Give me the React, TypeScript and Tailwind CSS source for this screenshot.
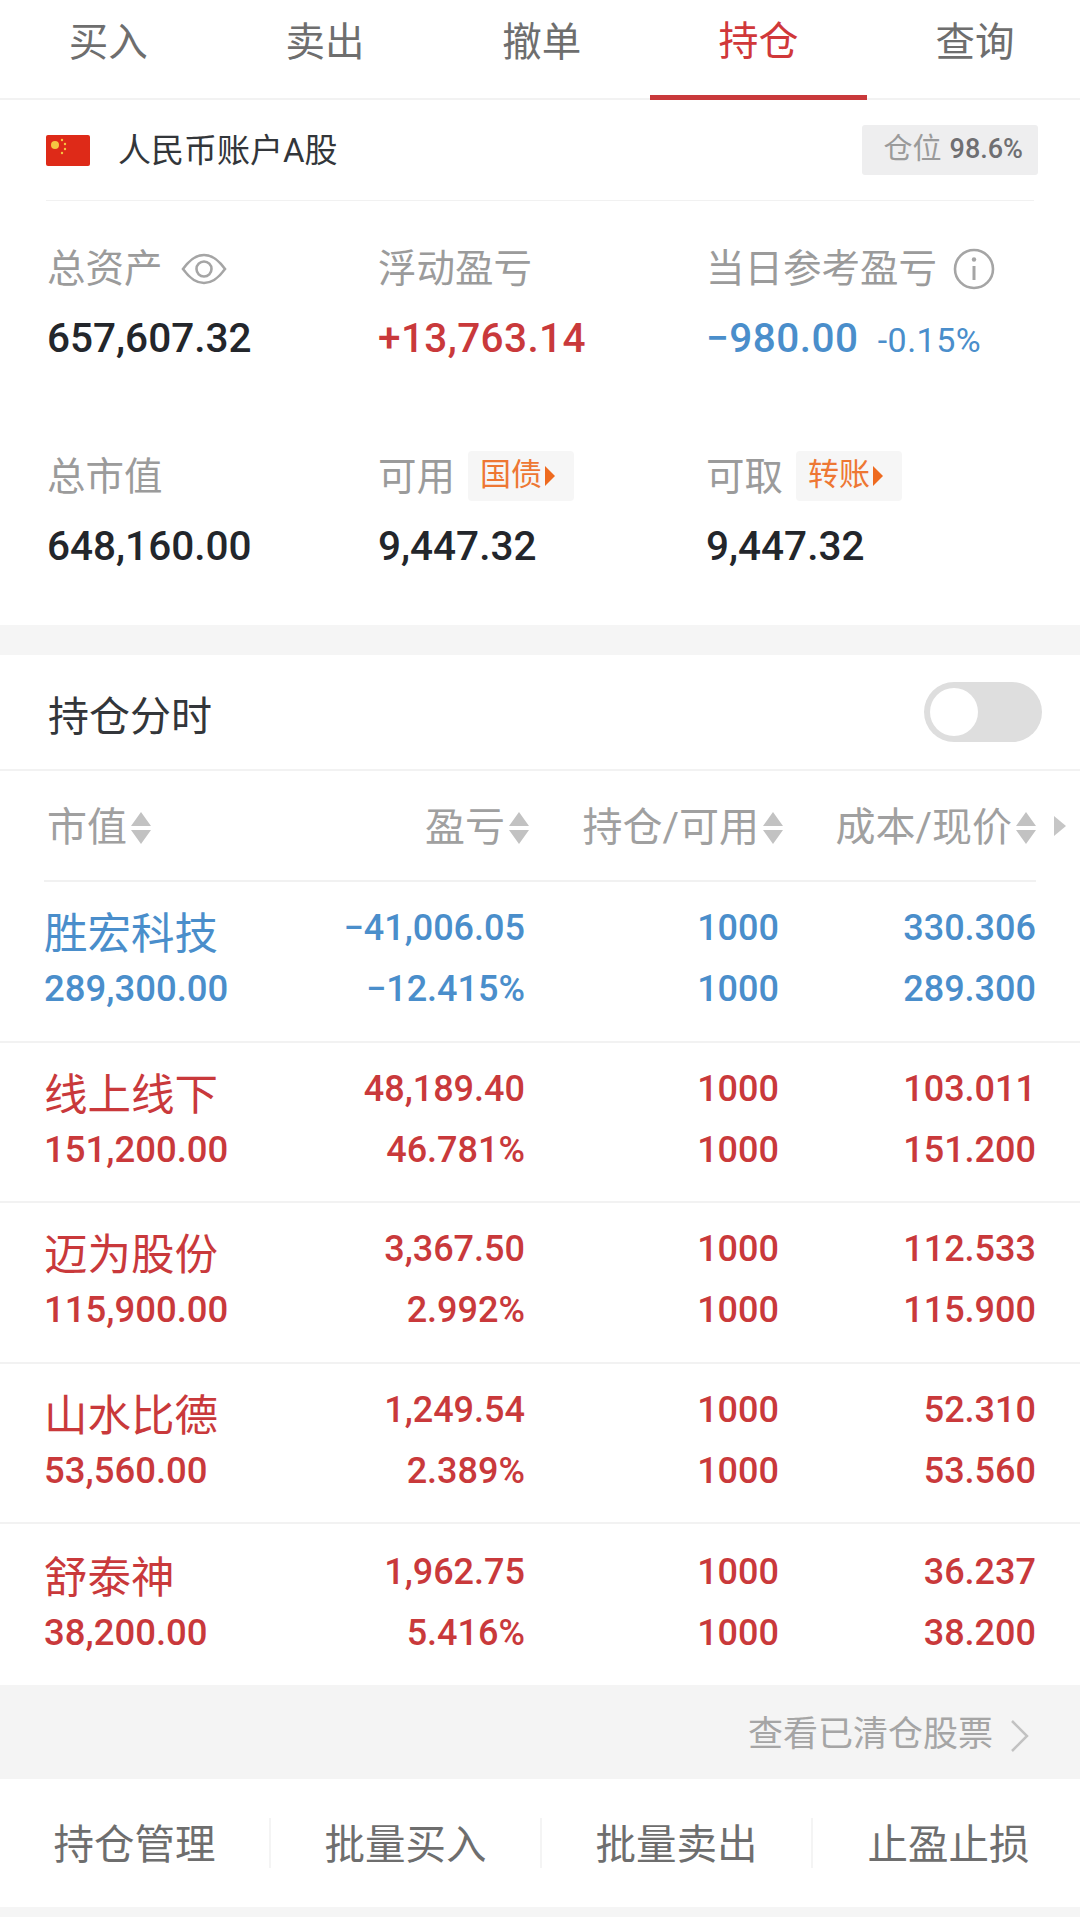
import React from "react";

const font = { fontFamily: '"Roboto","Noto Sans CJK SC",sans-serif' };

function Sort() {
  return (
    <svg width="22" height="36" viewBox="0 0 22 36" className="shrink-0 ml-[3px]">
      <path d="M11 2 L21 16 H1 Z M1 20 H21 L11 34 Z" fill="#c2c2c2" />
    </svg>
  );
}

function Stat({ label, extra, value, color = "text-[#23262b]", vc = "", tail }: { label: string; extra?: React.ReactNode; value: string; color?: string; vc?: string; tail?: React.ReactNode }) {
  return (
    <div className="flex flex-col">
      <div className="flex items-center h-[52px] text-[38.5px] text-[#9b9b9b]">
        <span>{label}</span>
        {extra}
      </div>
      <div className={`flex items-baseline mt-[13px] h-[52px] text-[40.5px] font-medium ${color}`}>
        <span className={vc}>{value}</span>
        {tail}
      </div>
    </div>
  );
}

function Tag({ text }: { text: string }) {
  return (
    <span className="ml-[13px] mb-[3px] flex items-center h-[50px] w-[106px] pl-[12px] rounded-[4px] bg-[#f6f6f6] text-[31px] text-[#ee7733]">
      {text}
      <svg width="12" height="22" viewBox="0 0 12 22" className="ml-[2px]">
        <path d="M1 1 L11 11 L1 21 Z" fill="#ee6a1f" />
      </svg>
    </span>
  );
}

const rows = [
  { n: "胜宏科技", v: "289,300.00", p: "−41,006.05", r: "−12.415%", c: "330.306", x: "289.300", col: "text-[#4a8ecb]" },
  { n: "线上线下", v: "151,200.00", p: "48,189.40", r: "46.781%", c: "103.011", x: "151.200", col: "text-[#c9393b]" },
  { n: "迈为股份", v: "115,900.00", p: "3,367.50", r: "2.992%", c: "112.533", x: "115.900", col: "text-[#c9393b]" },
  { n: "山水比德", v: "53,560.00", p: "1,249.54", r: "2.389%", c: "52.310", x: "53.560", col: "text-[#c9393b]" },
  { n: "舒泰神", v: "38,200.00", p: "1,962.75", r: "5.416%", c: "36.237", x: "38.200", col: "text-[#c9393b]" },
];

const tabs = ["买入", "卖出", "撤单", "持仓", "查询"];
const actions = ["持仓管理", "批量买入", "批量卖出", "止盈止损"];

export default function App() {
  return (
    <div style={font} className="w-[1080px] h-[1917px] overflow-hidden bg-white flex flex-col">
      <div className="flex h-[100px] border-b-2 border-[#f2f2f2] shrink-0">
        {tabs.map((t, i) => (
          <div
            key={t}
            className={`w-[216.7px] shrink-0 flex items-center justify-center pb-[12px] ${i === 3 ? "text-[40px] text-[#d0383a] border-b-[5px] border-[#c9393b] -mb-[2px]" : "text-[39.5px] text-[#6e6e6e]"}`}
          >
            {t}
          </div>
        ))}
      </div>

      <div className="mx-[46px] h-[101px] flex items-center justify-between border-b border-[#f1f1f1] shrink-0">
        <div className="flex items-center">
          <svg width="44" height="31" viewBox="0 0 44 31" className="rounded-[2px]">
            <rect width="44" height="31" fill="#de2a18" />
            <circle cx="9" cy="10" r="4" fill="#f5c542" />
            <circle cx="16" cy="5" r="1.2" fill="#f5c542" />
            <circle cx="19" cy="9" r="1.2" fill="#f5c542" />
            <circle cx="19" cy="14" r="1.2" fill="#f5c542" />
            <circle cx="16" cy="18" r="1.2" fill="#f5c542" />
          </svg>
          <span className="ml-[28px] pt-[2px] text-[33px] text-[#33363a]">人民币账户A股</span>
        </div>
        <div className="flex items-center justify-end w-[176px] h-[50px] pr-[15px] -mr-[4px] mb-[1px] rounded-[3px] bg-[#eeeeef] text-[29px] text-[#9a9a9a]">
          <span>仓位</span>
          <span className="ml-[8px] text-[#6f6f72] font-medium text-[27px]">98.6%</span>
        </div>
      </div>

      <div className="grid grid-cols-[331px_328px_1fr] pl-[47px] pt-[42px] gap-y-[34px] h-[424px] shrink-0">
        <Stat
          label="总资产"
          extra={
            <svg width="46" height="32" viewBox="0 0 46 32" className="ml-[18px]" fill="none" stroke="#a5a5a5" strokeWidth="2.6">
              <path d="M2 16 C10 5 16 2 23 2 C30 2 36 5 44 16 C36 27 30 30 23 30 C16 30 10 27 2 16 Z" />
              <circle cx="23" cy="16" r="7.5" />
            </svg>
          }
          value="657,607.32"
        />
        <Stat label="浮动盈亏" value="+13,763.14" color="text-[#c9393b]" vc="tracking-[0.4px]" />
        <Stat
          label="当日参考盈亏"
          extra={
            <svg width="42" height="42" viewBox="0 0 42 42" className="ml-[16px]" fill="none" stroke="#a5a5a5" strokeWidth="2.6">
              <circle cx="21" cy="21" r="19" />
              <path d="M21 18 V32" strokeWidth="3" />
              <circle cx="21" cy="11.5" r="2.2" fill="#a5a5a5" stroke="none" />
            </svg>
          }
          value="−980.00"
          color="text-[#4a8ecb]"
          vc="tracking-[0.5px]"
          tail={<span className="ml-[19px] text-[34px] font-normal tracking-[0.5px]">-0.15%</span>}
        />
        <Stat label="总市值" value="648,160.00" />
        <Stat label="可用" extra={<Tag text="国债" />} value="9,447.32" />
        <Stat label="可取" extra={<Tag text="转账" />} value="9,447.32" />
      </div>

      <div className="h-[30px] bg-[#f5f5f5] shrink-0" />

      <div className="h-[116px] flex items-center justify-between pl-[48px] pr-[38px] border-b-2 border-[#f2f2f2] shrink-0">
        <span className="pt-[12px] text-[41px] text-[#33363a]">持仓分时</span>
        <div className="w-[118px] h-[60px] rounded-full bg-[#dedede] p-[6px]">
          <div className="w-[48px] h-[48px] rounded-full bg-white" />
        </div>
      </div>

      <div className="relative ml-[44px] mr-[43px] h-[111px] pt-[2px] grid grid-cols-[1fr_260px_254px_253px] items-center text-[40px] text-[#a0a0a0] shrink-0">
        <div className="flex items-center pl-[3px]">市值<Sort /></div>
        <div className="flex items-center justify-end">盈亏<Sort /></div>
        <div className="flex items-center justify-end">持仓/可用<Sort /></div>
        <div className="flex items-center justify-end">成本/现价<Sort /></div>
        <svg width="14" height="22" viewBox="0 0 14 22" className="absolute right-[-30px] top-[44px]">
          <path d="M1 1 L13 11 L1 21 Z" fill="#c6c6c6" />
        </svg>
      </div>
      <div className="mx-[44px] h-[2px] bg-[#f1f1f1] -mt-[2px] shrink-0" />

      <div className="flex flex-col shrink-0">
        {rows.map((r, i) => (
          <div
            key={r.n}
            className={`${i < rows.length - 1 ? "h-[160.5px] border-b-2 border-[#f2f2f2]" : "h-[161px]"} px-[44px] pb-[5px] grid grid-cols-[1fr_260px_254px_257px] grid-rows-[52px_52px] content-center gap-y-[9px] text-[36px] font-medium ${r.col}`}
          >
            <div className="h-[52px] leading-[66px] text-[43.5px] font-normal">{r.n}</div>
            <div className="leading-[52px] text-right">{r.p}</div>
            <div className="leading-[52px] text-right">1000</div>
            <div className="leading-[52px] text-right">{r.c}</div>
            <div className="leading-[52px] text-[36.5px]">{r.v}</div>
            <div className="leading-[52px] text-right">{r.r}</div>
            <div className="leading-[52px] text-right">1000</div>
            <div className="leading-[52px] text-right">{r.x}</div>
          </div>
        ))}
      </div>

      <div className="h-[94px] pt-[7px] bg-[#f4f4f4] flex items-center justify-end pr-[50px] text-[35px] text-[#a5a5a5] shrink-0">
        查看已清仓股票
        <svg width="20" height="34" viewBox="0 0 20 34" className="ml-[17px]" fill="none" stroke="#c2c2c2" strokeWidth="2.5">
          <path d="M2 2 L17 17 L2 32" />
        </svg>
      </div>

      <div className="h-[128px] grid grid-cols-[repeat(4,271px)] items-center shrink-0">
        {actions.map((a, i) => (
          <div key={a} className={`h-[50px] pt-[5px] flex items-center justify-center text-[40.5px] text-[#6e6e6e] ${i < 3 ? "border-r-2 border-[#f4f4f4]" : ""}`}>
            {a}
          </div>
        ))}
      </div>

      <div className="flex-1 bg-[#f5f5f5]" />
    </div>
  );
}
